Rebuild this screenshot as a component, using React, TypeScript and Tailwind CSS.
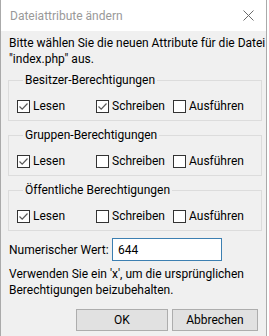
import React from "react";

const font = { fontFamily: 'Roboto, "Liberation Sans", sans-serif' };

function Check({ checked, label }: { checked: boolean; label: string }) {
  return (
    <div className="flex items-center gap-[3px] whitespace-nowrap">
      <div className="w-[13px] h-[13px] border border-[#333333] bg-white flex items-center justify-center shrink-0">
        {checked && (
          <svg width="11" height="11" viewBox="0 0 11 11">
            <path d="M1.5 5.5 L4.2 8.2 L9.5 2.5" fill="none" stroke="#5a5a5a" strokeWidth="1.2" />
          </svg>
        )}
      </div>
      <span>{label}</span>
    </div>
  );
}

function Group({ title, items }: { title: string; items: boolean[] }) {
  const labels = ["Lesen", "Schreiben", "Ausführen"];
  return (
    <fieldset className="border border-[#dcdcdc] pl-[8px] pt-[10px] pb-[8px] h-[49px]">
      <legend className="ml-[6px] px-[2px] leading-[16px] whitespace-nowrap">{title}</legend>
      <div className="grid grid-cols-[79px_77px_auto] leading-[16px]">
        {labels.map((l, i) => (
          <Check key={l} checked={items[i]} label={l} />
        ))}
      </div>
    </fieldset>
  );
}

export default function App() {
  return (
    <div className="w-[269px] h-[336px] bg-white overflow-hidden">
      <div
        className="w-[267px] h-[336px] border-x border-[#aaaaaa] flex flex-col text-[12px] text-black"
        style={font}
      >
        <div className="h-[31px] bg-white flex items-center justify-between pl-[9px] pr-[12px] shrink-0">
          <span className="text-[#999999] text-[12px]">Dateiattribute ändern</span>
          <svg width="11" height="11" viewBox="0 0 11 11">
            <path d="M0.5 0.5 L10.5 10.5 M10.5 0.5 L0.5 10.5" stroke="#6a6a6a" strokeWidth="1" />
          </svg>
        </div>
        <div className="flex-1 bg-[#f0f0f0] pl-[7px] pr-[4px] pt-[4px] flex flex-col">
          <p className="leading-[16px] pl-[1px] whitespace-nowrap">
            Bitte wählen Sie die neuen Attribute für die Datei
            <br />"index.php" aus.
          </p>
          <div className="mt-[5px] flex flex-col gap-[6px]">
            <Group title="Besitzer-Berechtigungen" items={[true, true, false]} />
            <Group title="Gruppen-Berechtigungen" items={[true, false, false]} />
            <Group title="Öffentliche Berechtigungen" items={[true, false, false]} />
          </div>
          <div className="mt-[7px] flex items-center pl-[1px]">
            <span className="w-[103px] leading-[16px] whitespace-nowrap">Numerischer Wert:</span>
            <div className="w-[110px] h-[23px] bg-white border border-[#3c7fb1] flex items-center pl-[5px]">
              644
            </div>
          </div>
          <p className="mt-[5px] leading-[16px] pl-[1px] whitespace-nowrap">
            Verwenden Sie ein 'x', um die ursprünglichen
            <br />
            Berechtigungen beizubehalten.
          </p>
          <div className="mt-[11px] flex justify-end gap-[4px] pr-[4px]">
            <button className="w-[92px] h-[22px] bg-[#e1e1e1] border border-[#adadad] leading-[16px]">
              OK
            </button>
            <button className="w-[86px] h-[22px] bg-[#e1e1e1] border border-[#adadad] leading-[16px]">
              Abbrechen
            </button>
          </div>
        </div>
      </div>
    </div>
  );
}
